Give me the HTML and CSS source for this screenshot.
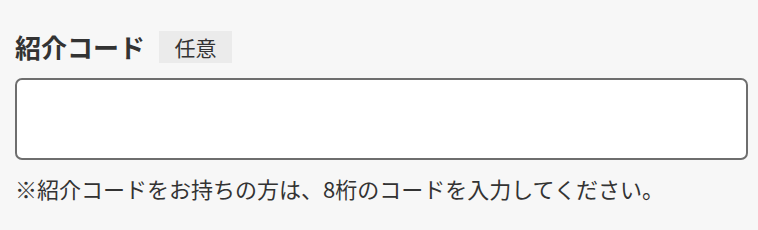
FILE: index.html
```html
<!DOCTYPE html>
<html lang="ja">
<head>
<meta charset="utf-8">
<link rel="stylesheet" href="styles.css">
</head>
<body>
<div class="field">
  <div class="field-head">
    <label class="field-label" for="code">紹介コード</label>
    <span class="badge">任意</span>
  </div>
  <input class="field-input" id="code" type="text">
  <p class="field-note">※紹介コードをお持ちの方は、8桁のコードを入力してください。</p>
</div>
</body>
</html>
```
FILE: styles.css
```css
html, body {
  margin: 0;
  padding: 0;
  background: #f7f7f7;
}
body {
  font-family: "Noto Sans CJK JP", "Noto Sans", sans-serif;
  color: #333333;
}
.field {
  padding: 31px 10px 0 15px;
}
.field-head {
  display: flex;
  align-items: center;
  gap: 14px;
  height: 32px;
}
.field-label {
  font-size: 26px;
  font-weight: 700;
  line-height: 32px;
  color: #333333;
}
.badge {
  display: inline-flex;
  align-items: center;
  justify-content: center;
  width: 73px;
  height: 32px;
  background: #ebebeb;
  font-size: 21px;
  color: #333333;
}
.field-input {
  display: block;
  box-sizing: border-box;
  width: 100%;
  height: 82px;
  margin: 15px 0 0;
  border: 2px solid #6e6e6e;
  border-radius: 7px;
  background: #ffffff;
  outline: none;
}
.field-note {
  margin: 13px 0 0;
  font-size: 22px;
  line-height: 30px;
  color: #333333;
}
```
